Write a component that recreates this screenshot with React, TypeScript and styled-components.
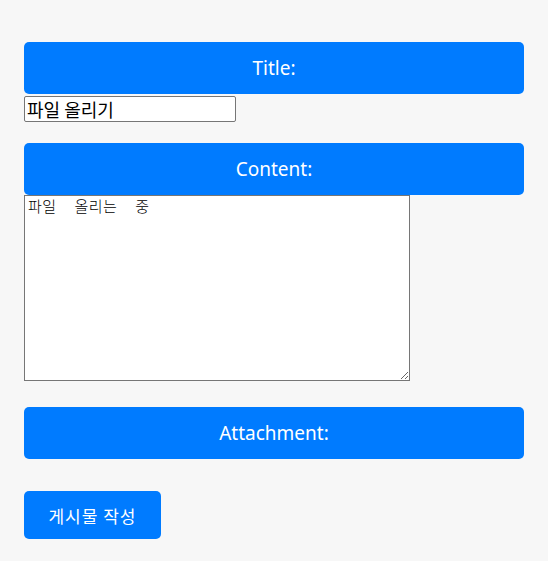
import React from 'react';
import styled, { createGlobalStyle } from 'styled-components';

const GlobalStyle = createGlobalStyle`
  html, body {
    margin: 0;
    padding: 0;
    background: #f7f7f7;
  }
  body {
    font-family: 'Noto Sans', 'Noto Sans CJK KR', sans-serif;
  }
`;

const Page = styled.form`
  display: flex;
  flex-direction: column;
  align-items: flex-start;
  padding: 42px 24px 22px;
  width: 500px;
`;

const Field = styled.div<{ gap: number }>`
  display: flex;
  flex-direction: column;
  align-items: flex-start;
  width: 100%;
  margin-bottom: ${(p) => p.gap}px;
`;

const Label = styled.label<{ spacing?: number }>`
  box-sizing: border-box;
  display: flex;
  align-items: center;
  justify-content: center;
  width: 100%;
  height: 52px;
  margin-bottom: ${(p) => p.spacing ?? 0}px;
  background: #007bff;
  color: #fff;
  border-radius: 5px;
  font-size: 19px;
`;

const TextInput = styled.input`
  box-sizing: border-box;
  width: 212px;
  height: 26px;
  margin: 0;
  padding: 0 2px;
  border: 1px solid #767676;
  border-radius: 2px;
  background: #fff;
  color: #000;
  font-family: 'Noto Sans CJK KR', sans-serif;
  font-size: 18px;
  line-height: 24px;
`;

const TextArea = styled.textarea`
  box-sizing: border-box;
  width: 386px;
  height: 186px;
  margin: 0;
  padding: 0 3px;
  border: 1px solid #767676;
  border-radius: 0;
  background: #fff;
  color: #000;
  font-family: 'Noto Sans CJK KR', monospace;
  font-size: 15px;
  font-weight: 300;
  line-height: 20px;
  letter-spacing: 0.5px;
  word-spacing: 14px;
  resize: both;
`;

const Submit = styled.button`
  box-sizing: border-box;
  width: 137px;
  height: 48px;
  border: none;
  border-radius: 5px;
  background: #007bff;
  color: #fff;
  font-family: 'Noto Sans CJK KR', sans-serif;
  font-size: 17px;
  letter-spacing: 1px;
  cursor: pointer;
`;

export default function App() {
  return (
    <>
      <GlobalStyle />
      <Page onSubmit={(e) => e.preventDefault()}>
        <Field gap={21}>
          <Label htmlFor="title" spacing={2}>Title:</Label>
          <TextInput id="title" defaultValue="파일 올리기" />
        </Field>
        <Field gap={26}>
          <Label htmlFor="content">Content:</Label>
          <TextArea id="content" defaultValue="파일 올리는 중" />
        </Field>
        <Field gap={32}>
          <Label>Attachment:</Label>
        </Field>
        <Submit type="submit">게시물 작성</Submit>
      </Page>
    </>
  );
}
